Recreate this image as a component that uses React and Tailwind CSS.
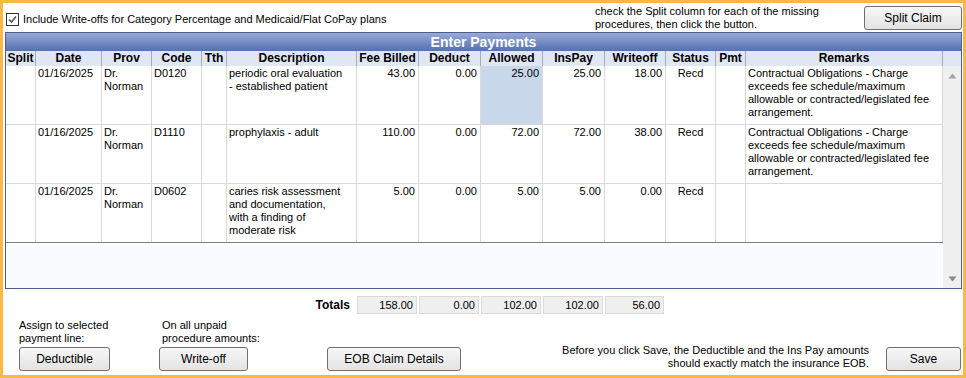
import React from "react";

const font = { fontFamily: '"Liberation Sans", Arial, sans-serif' };

const columns = [
  { key: "split", label: "Split", w: "w-[30px]" },
  { key: "date", label: "Date", w: "w-[66px]" },
  { key: "prov", label: "Prov", w: "w-[50px]" },
  { key: "code", label: "Code", w: "w-[50px]" },
  { key: "tth", label: "Tth", w: "w-[25px]" },
  { key: "desc", label: "Description", w: "w-[130px]" },
  { key: "fee", label: "Fee Billed", w: "w-[62px]", num: true },
  { key: "deduct", label: "Deduct", w: "w-[62px]", num: true },
  { key: "allowed", label: "Allowed", w: "w-[62px]", num: true },
  { key: "inspay", label: "InsPay", w: "w-[62px]", num: true },
  { key: "writeoff", label: "Writeoff", w: "w-[61px]", num: true },
  { key: "status", label: "Status", w: "w-[50px]", center: true },
  { key: "pmt", label: "Pmt", w: "w-[30px]" },
  { key: "remarks", label: "Remarks", w: "w-[197px]" },
];

const remark = [
  "Contractual Obligations - Charge",
  "exceeds fee schedule/maximum",
  "allowable or contracted/legislated fee",
  "arrangement.",
];

const rows = [
  {
    date: ["01/16/2025"],
    prov: ["Dr.", "Norman"],
    code: ["D0120"],
    tth: [],
    desc: ["periodic oral evaluation", "- established patient"],
    fee: ["43.00"],
    deduct: ["0.00"],
    allowed: ["25.00"],
    inspay: ["25.00"],
    writeoff: ["18.00"],
    status: ["Recd"],
    pmt: [],
    remarks: remark,
    selected: "allowed",
  },
  {
    date: ["01/16/2025"],
    prov: ["Dr.", "Norman"],
    code: ["D1110"],
    tth: [],
    desc: ["prophylaxis - adult"],
    fee: ["110.00"],
    deduct: ["0.00"],
    allowed: ["72.00"],
    inspay: ["72.00"],
    writeoff: ["38.00"],
    status: ["Recd"],
    pmt: [],
    remarks: remark,
  },
  {
    date: ["01/16/2025"],
    prov: ["Dr.", "Norman"],
    code: ["D0602"],
    tth: [],
    desc: [
      "caries risk assessment",
      "and documentation,",
      "with a finding of",
      "moderate risk",
    ],
    fee: ["5.00"],
    deduct: ["0.00"],
    allowed: ["5.00"],
    inspay: ["5.00"],
    writeoff: ["0.00"],
    status: ["Recd"],
    pmt: [],
    remarks: [],
    last: true,
  },
];

function Button({ children, className = "" }) {
  return (
    <button
      className={`h-[24px] rounded-[3px] border border-[#707070] bg-gradient-to-b from-[#f7f7f7] to-[#e3e3e3] text-[12px] text-black ${className}`}
    >
      {children}
    </button>
  );
}

function Lines({ lines }) {
  return lines.map((l, i) => (
    <div key={i} className="whitespace-nowrap">
      {l}
    </div>
  ));
}

export default function App() {
  return (
    <div
      style={font}
      className="w-[966px] h-[378px] border-[3px] border-[#fbb848] bg-white text-black text-[11px] leading-[13px] flex flex-col overflow-hidden"
    >
      {/* top bar */}
      <div className="h-[29px] shrink-0 flex items-start">
        <div className="w-[592px] pl-[3px] pt-[10px] flex items-center gap-[4px]">
          <div className="w-[13px] h-[13px] border border-[#333] bg-white flex items-center justify-center">
            <svg width="11" height="11" viewBox="0 0 11 11">
              <polyline points="2,5.5 4.5,8 9,2.5" fill="none" stroke="#555" strokeWidth="1.6" />
            </svg>
          </div>
          <span className="whitespace-nowrap">
            Include Write-offs for Category Percentage and Medicaid/Flat CoPay plans
          </span>
        </div>
        <div className="w-[269px] pt-[2px] leading-[13px]">
          <div className="whitespace-nowrap">check the Split column for each of the missing</div>
          <div className="whitespace-nowrap">procedures, then click the button.</div>
        </div>
        <Button className="mt-[3px] w-[98px]">Split Claim</Button>
      </div>

      {/* grid */}
      <div className="ml-[2px] w-[957px] border border-[#4d5d8c] flex flex-col">
        <div className="h-[18px] bg-gradient-to-b from-[#97a9d8] to-[#5670b0] text-white font-bold text-[14px] leading-[18px] text-center">
          Enter Payments
        </div>
        <div className="h-[15px] bg-[#dfe7f3] flex font-bold text-[12px] leading-[15px]">
          {columns.map((c) => (
            <div key={c.key} className={`${c.w} shrink-0 text-center border-r border-[#a8acb4] whitespace-nowrap`}>
              {c.label}
            </div>
          ))}
          <div className="flex-1" />
        </div>
        <div className="flex">
          <div className="w-[937px] flex flex-col">
            {rows.map((r, ri) => (
              <div
                key={ri}
                className={`h-[59px] flex border-b ${r.last ? "border-[#808080]" : "border-[#d9d9d9]"}`}
              >
                {columns.map((c) => (
                  <div
                    key={c.key}
                    className={`${c.w} shrink-0 border-r border-[#d9d9d9] pt-[1px] ${
                      c.num ? "text-right pr-[3px]" : c.center ? "text-center" : "pl-[2px]"
                    } ${r.selected === c.key ? "bg-[#c8d8ea]" : ""}`}
                  >
                    {c.key === "split" ? null : <Lines lines={r[c.key]} />}
                  </div>
                ))}
              </div>
            ))}
            <div className="h-[45px] bg-[#f9fbfe]" />
          </div>
          <div className="w-[18px] bg-[#f0f0f0] flex flex-col items-center justify-between pt-[7px] pb-[6px]">
            <svg width="9" height="6" viewBox="0 0 9 6">
              <polygon points="0.5,5.5 4.5,0.5 8.5,5.5" fill="#a3a3a3" />
            </svg>
            <svg width="9" height="6" viewBox="0 0 9 6">
              <polygon points="0.5,0.5 8.5,0.5 4.5,5.5" fill="#8a8a8a" />
            </svg>
          </div>
        </div>
      </div>

      {/* totals */}
      <div className="mt-[7px] h-[18px] flex items-center">
        <div className="w-[348px] text-right font-bold text-[12px] pr-[1px]">Totals</div>
        <div className="ml-[6px] flex">
          {[
            ["158.00", "w-[62px]"],
            ["0.00", "w-[62px]"],
            ["102.00", "w-[62px]"],
            ["102.00", "w-[62px]"],
            ["56.00", "w-[61px]"],
          ].map(([v, w], i) => (
            <div key={i} className={`${w} pr-[2px]`}>
              <div className="h-[18px] bg-[#efefef] border border-[#dadada] text-right pr-[3px] leading-[16px]">
                {v}
              </div>
            </div>
          ))}
        </div>
      </div>

      {/* bottom */}
      <div className="mt-[5px] flex items-end">
        <div className="ml-[16px] w-[91px] flex flex-col">
          <div className="whitespace-nowrap">Assign to selected</div>
          <div className="whitespace-nowrap">payment line:</div>
          <Button className="mt-[2px] w-[91px]">Deductible</Button>
        </div>
        <div className="ml-[49px] w-[89px] flex flex-col">
          <div className="pl-[3px] whitespace-nowrap">On all unpaid</div>
          <div className="pl-[3px] whitespace-nowrap">procedure amounts:</div>
          <Button className="mt-[2px] w-[89px]">Write-off</Button>
        </div>
        <Button className="ml-[79px] w-[134px]">EOB Claim Details</Button>
        <div className="flex-1 text-right pr-[17px] leading-[13px] translate-y-[-1px]">
          <div className="whitespace-nowrap">Before you click Save, the Deductible and the Ins Pay amounts</div>
          <div className="whitespace-nowrap">should exactly match the insurance EOB.</div>
        </div>
        <Button className="w-[75px] mr-[2px]">Save</Button>
      </div>
    </div>
  );
}
